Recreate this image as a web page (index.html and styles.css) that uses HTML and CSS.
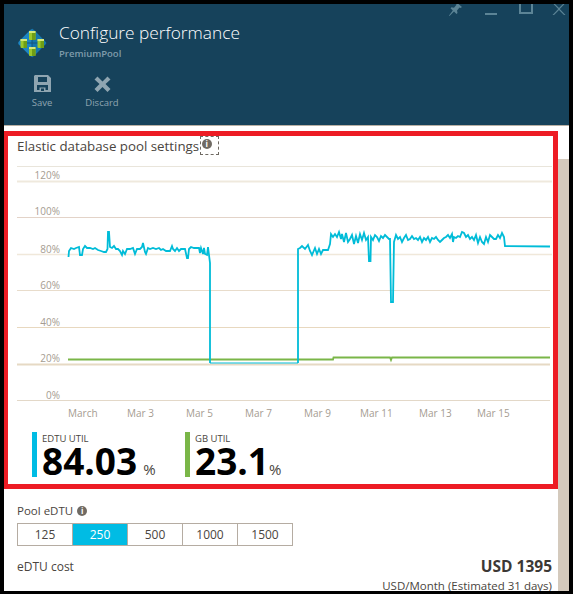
FILE: index.html
```html
<!DOCTYPE html>
<html>
  <head>
    <link rel="stylesheet" href="styles.css">
  </head>
  <body>
    <div class="frame">
      <header class="blade-header">
        <div class="window-controls">
          <svg class="pin" width="14" height="14" viewBox="0 0 14 14"><path d="M8 0l6 5-1.500 1-1-.5-2.500 3 .5 2.500-1 1-2.500-2.500-4.500 4.500-.5-.5 3.800-5-2.300-2.300 1-1 2.500.5 2.500-3-.5-1z"/></svg>
          <span class="minimize"></span>
          <span class="maximize"></span>
          <svg class="close" width="14" height="12" viewBox="0 0 14 12"><path d="M2 0l5 5 5-5h1.500l-5.700 6 5.700 6h-1.500l-5-5-5 5H.5l5.700-6L.5 0z"/></svg>
        </div>
        <div class="title-row">
          <svg class="logo" width="32" height="32" viewBox="0 0 32 32">
            <rect x="5.500" y="5.500" width="21" height="21" rx="3" transform="rotate(45 16 16)" fill="#1c86c4"/>
            <path d="M16 1.500L30.500 16 16 30.500z" fill="#1577ad"/>
            <path d="M16 8v16M8 16h16" stroke="#14557f" stroke-width="1"/>
            <g class="cyl"><rect x="13" y="4" width="6.500" height="9" rx="1" fill="#9cc82c"/><rect x="16" y="4" width="3.500" height="9" fill="#6f9e16"/><rect x="13" y="4" width="6.500" height="2" fill="#d6e87a"/></g>
            <g class="cyl"><rect x="4.500" y="12" width="6.500" height="9" rx="1" fill="#9cc82c"/><rect x="7.500" y="12" width="3.500" height="9" fill="#6f9e16"/><rect x="4.500" y="12" width="6.500" height="2" fill="#d6e87a"/></g>
            <g class="cyl"><rect x="21.500" y="12" width="6.500" height="9" rx="1" fill="#9cc82c"/><rect x="24.500" y="12" width="3.500" height="9" fill="#6f9e16"/><rect x="21.500" y="12" width="6.500" height="2" fill="#d6e87a"/></g>
            <g class="cyl"><rect x="13" y="20" width="6.500" height="9" rx="1" fill="#9cc82c"/><rect x="16" y="20" width="3.500" height="9" fill="#6f9e16"/><rect x="13" y="20" width="6.500" height="2" fill="#d6e87a"/></g>
          </svg>
          <div class="titles">
            <div class="title">Configure performance</div>
            <div class="subtitle">PremiumPool</div>
          </div>
        </div>
        <div class="commands">
          <div class="command">
            <svg width="17" height="17" viewBox="0 0 17 17"><path fill-rule="evenodd" d="M1 0h13l3 3v14H0V1zM4 2v5h9V2zM3 10v5h2.500v-2.500h6V15H14v-5zM7 13.500h3V16H7z"/></svg>
            <span>Save</span>
          </div>
          <div class="command">
            <svg width="17" height="17" viewBox="0 0 17 17"><path d="M3.500 1.500l5 5 5-5 3 3-5 4.500 5 5-3 3-5-5-5 5-3-3 5-5-5-4.500z"/></svg>
            <span>Discard</span>
          </div>
        </div>
      </header>

      <div class="blade-body">
        <main class="content">
          <section class="highlight">
            <div class="settings-title">
              <span class="settings-text">Elastic database pool settings</span>
              <span class="focus-box"><span class="info">i</span></span>
            </div>

            <svg class="chart" width="535" height="262" viewBox="8 156 535 262">
              <g fill="none">
                <path d="M8 167.500H543" stroke="#e9e5db"/>
                <path d="M8 182.500H543" stroke="#efe9dd" stroke-width="2"/>
                <path d="M8 218.500H543" stroke="#e3d3c8"/>
                <path d="M8 255.500H543" stroke="#f0e8da" stroke-width="1.500"/>
                <path d="M8 291.500H541" stroke="#e8dccb"/>
                <path d="M8 328.500H541" stroke="#e8d8bf"/>
                <path d="M8 365.500H541" stroke="#e6d9c4" stroke-width="2"/>
                <path d="M8 401.500H541" stroke="#e3d8c8"/>
              </g>
              <g class="axis-y">
                <text x="51" y="180">120%</text>
                <text x="51" y="216">100%</text>
                <text x="51" y="254">80%</text>
                <text x="51" y="290">60%</text>
                <text x="51" y="327">40%</text>
                <text x="51" y="363">20%</text>
                <text x="51" y="400">0%</text>
              </g>
              <g class="axis-x">
                <text x="59" y="418">March</text>
                <text x="118" y="418">Mar 3</text>
                <text x="177" y="418">Mar 5</text>
                <text x="236" y="418">Mar 7</text>
                <text x="295" y="418">Mar 9</text>
                <text x="351" y="418">Mar 11</text>
                <text x="410" y="418">Mar 13</text>
                <text x="468" y="418">Mar 15</text>
              </g>
              <polyline class="line-edtu-low" points="201,364 289,364"/>
              <polyline class="line-gb" points="59,360.500 324,360.500 324.500,358.500 381,358.500 382,361 383,358.500 541,358.500"/>
              <polyline class="line-edtu" points="59.500,258 60,252 62,249 65,250 67,249 70,248 71,256 73,256 74,250 76,247 78,249 81,249 84,250 86,249 89,251 92,252 95,253 97,253 98.500,250 99,233 100,233 101,248 103,249 105,247 107,250 109,250 111,252 113,256 114,252 116,255 118,250 121,250 124,249 126,255 128,250 131,250 133,248 134,244 136,253 137,255 139,249 141,250 144,249 147,250 150,249 152,251 154,250 157,252 159,252 161,252 163,247 164,250 166,252 168,249 170,252 172,250 174,250 176,250 178,259 179,259 180,250 182,248 185,249 188,249 190,249 191,254 192,249 194,255 195,249 196,255 198,256 199,248 200,256 201,264 201,364"/>
              <polyline class="line-edtu" points="289,364 289,250 291,249 293,247 296,250 299,246 301,252 303,256 306,249 308,255 310,250 312,255 314,251 317,251 319,251 321,245 322,235 324,238 326,235 328,238 330,233 332,240 333,235 335,243 337,234 339,243 341,240 343,236 345,245 347,237 349,244 351,235 353,241 355,234 357,241 359,238 360,262 361.500,262 362,238 364,241 366,236 368,238 370,242 372,237 374,239 376,236 378,238 380,240 381,240 382,303 384,303 385,243 387,236 389,240 391,238 393,243 395,239 397,236 399,241 401,240 403,237 405,240 407,239 409,241 411,238 413,243 415,239 417,241 419,238 421,243 423,239 425,240 427,238 429,241 431,243 433,241 435,239 437,238 439,236 441,239 443,235 444,243 445,238 447,239 449,237 451,238 453,233 455,234 457,238 459,236 461,240 463,238 465,241 467,236 469,244 471,238 473,243 475,245 477,238 479,243 481,236 483,238 485,240 487,240 489,236 491,239 493,234 495,238 496,247 541,247.500"/>
            </svg>

            <div class="stats">
              <div class="stat stat-edtu">
                <div class="stat-label">EDTU UTIL</div>
                <div class="stat-value">84.03<span class="unit">%</span></div>
              </div>
              <div class="stat stat-gb">
                <div class="stat-label">GB UTIL</div>
                <div class="stat-value">23.1<span class="unit">%</span></div>
              </div>
            </div>
          </section>

          <section class="pool">
            <div class="pool-label">Pool eDTU <span class="info">i</span></div>
            <div class="segments">
              <div class="segment">125</div>
              <div class="segment selected">250</div>
              <div class="segment">500</div>
              <div class="segment">1000</div>
              <div class="segment">1500</div>
            </div>
            <div class="cost-row">
              <span class="cost-label">eDTU cost</span>
              <div class="cost-value">
                <div class="cost-total">USD 1395</div>
                <div class="cost-note">USD/Month (Estimated 31 days)</div>
              </div>
            </div>
          </section>
        </main>
        <div class="scrollbar"></div>
      </div>
    </div>
  </body>
</html>
```

FILE: styles.css
```css
* {
  box-sizing: border-box;
}

html,
body {
  margin: 0;
  height: 100%;
}

body {
  font-family: "Open Sans", "Noto Sans", sans-serif;
  color: #4a4540;
  background-color: #000;
}

.frame {
  width: 573px;
  height: 594px;
  border: solid #000;
  border-width: 4px 4px 3px;
  background-color: #fff;
  overflow: hidden;
  display: flex;
  flex-direction: column;
}

.blade-header {
  height: 122px;
  flex: none;
  background-color: #16425b;
  border-bottom: 1px solid #b9b0a4;
  color: #fff;
  position: relative;
  padding: 17px 0 0 12px;
}

.window-controls svg {
  fill: #5c8496;
}

.pin {
  position: absolute;
  top: -2px;
  right: 107px;
}

.minimize {
  position: absolute;
  top: 9px;
  right: 72px;
  width: 12px;
  height: 2px;
  background-color: #5c8496;
}

.maximize {
  position: absolute;
  top: -2px;
  right: 36px;
  width: 14px;
  height: 12px;
  border: 2px solid #5c8496;
}

.close {
  position: absolute;
  top: -1px;
  right: 3px;
}

.title-row {
  display: flex;
  align-items: flex-start;
  gap: 11px;
}

.logo {
  margin-top: 6px;
  flex: none;
}

.title {
  font-size: 17.300px;
  font-weight: 300;
  line-height: 24px;
}

.subtitle {
  font-size: 9.500px;
  font-weight: 600;
  line-height: 13px;
  margin-top: 2px;
  color: #7f9cab;
}

.commands {
  display: flex;
  margin-top: 15px;
  margin-left: -4px;
}

.command {
  width: 60px;
  display: flex;
  flex-direction: column;
  align-items: center;
  font-size: 9.500px;
  color: #8fa5b1;
}

.command svg {
  fill: #8fa5b1;
  display: block;
}

.command span {
  margin-top: 4px;
}

.blade-body {
  flex: 1;
  display: flex;
  min-height: 0;
  padding-top: 5px;
}

.content {
  width: 554px;
  flex: none;
}

.scrollbar {
  width: 11px;
  margin-top: 28px;
  background-color: #d4cabd;
}

.highlight {
  height: 358px;
  border: 5px solid #ed1c24;
  border-width: 5px 5px 5px 4px;
  padding: 0 0 0 9px;
}

.settings-title {
  display: flex;
  align-items: center;
  height: 19px;
  font-size: 13.300px;
  line-height: 19px;
}

.settings-text {
  padding-top: 1px;
}

.focus-box {
  width: 19px;
  height: 19px;
  margin-left: 1px;
  border: 1px dashed #6f6a63;
  display: flex;
  justify-content: center;
  padding: 2px 6px 0 0;
}

.info {
  display: inline-block;
  width: 10px;
  height: 10px;
  border-radius: 50%;
  background-color: #6f6a63;
  color: #fff;
  font-size: 8px;
  font-weight: 700;
  line-height: 10px;
  text-align: center;
}

.chart {
  display: block;
  overflow: visible;
}

.axis-y text {
  font-size: 10px;
  fill: #a59c91;
  text-anchor: end;
}

.axis-x text {
  font-size: 10px;
  fill: #a59c91;
}

.line-edtu {
  fill: none;
  stroke: #00bcd8;
  stroke-width: 1.800;
}

.line-edtu-low {
  fill: none;
  stroke: #00bcd8;
  stroke-width: 1.200;
}

.line-gb {
  fill: none;
  stroke: #7ab648;
  stroke-width: 1.800;
}

.stats {
  display: flex;
  margin-top: 15px;
  padding-left: 15px;
}

.stat {
  width: 153px;
  height: 45px;
  border-left: 5px solid #00bce4;
  padding-left: 5px;
}

.stat-gb {
  border-left-color: #7ab648;
}

.stat-label {
  font-size: 9.500px;
  line-height: 13px;
  color: #4a4540;
}

.stat-value {
  font-size: 37px;
  font-weight: 700;
  line-height: 32px;
  color: #000;
}

.unit {
  font-size: 15px;
  font-weight: 400;
  color: #4a4540;
  margin-left: 6px;
}

.stat-gb .unit {
  margin-left: 0;
}

.pool {
  padding: 14px 0 0 13px;
}

.pool-label {
  display: flex;
  align-items: center;
  gap: 4px;
  font-size: 11.500px;
  line-height: 16px;
}

.segments {
  display: flex;
  width: 276px;
  height: 23px;
  margin-top: 4px;
  border: 1px solid #b5aca2;
}

.segment {
  flex: 1;
  border-left: 1px solid #b5aca2;
  font-size: 12px;
  line-height: 21px;
  text-align: center;
}

.segment:first-child {
  border-left: none;
}

.segment.selected {
  background-color: #00bce4;
  color: #fff;
}

.cost-row {
  display: flex;
  justify-content: space-between;
  margin-top: 13px;
  padding-right: 6px;
}

.cost-label {
  font-size: 12px;
  line-height: 16px;
}

.cost-value {
  text-align: right;
  margin-top: -3px;
}

.cost-total {
  font-size: 15.500px;
  font-weight: 700;
  line-height: 20px;
  color: #3c3835;
}

.cost-note {
  font-size: 11.500px;
  line-height: 16px;
  margin-top: 2px;
}
```
